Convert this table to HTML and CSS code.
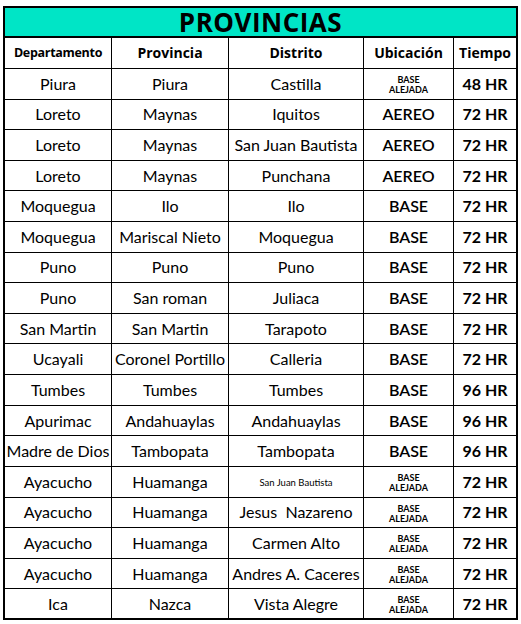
FILE: index.html
```html
<!DOCTYPE html>
<html lang="es">
<head>
<meta charset="utf-8">
<title>Provincias</title>
<link rel="stylesheet" href="styles.css">
</head>
<body>
<div class="sheet">
<div class="grid">
<div class="title">PROVINCIAS</div>
<div class="th small">Departamento</div><div class="th">Provincia</div><div class="th">Distrito</div><div class="th">Ubicación</div><div class="th">Tiempo</div>

<div class="td">Piura</div><div class="td">Piura</div><div class="td">Castilla</div><div class="td tiny"><span>BASE</span><span>ALEJADA</span></div><div class="td hr">48 HR</div>
<div class="td">Loreto</div><div class="td">Maynas</div><div class="td">Iquitos</div><div class="td b">AEREO</div><div class="td hr">72 HR</div>
<div class="td">Loreto</div><div class="td">Maynas</div><div class="td">San Juan Bautista</div><div class="td b">AEREO</div><div class="td hr">72 HR</div>
<div class="td">Loreto</div><div class="td">Maynas</div><div class="td">Punchana</div><div class="td b">AEREO</div><div class="td hr">72 HR</div>
<div class="td">Moquegua</div><div class="td">Ilo</div><div class="td">Ilo</div><div class="td b">BASE</div><div class="td hr">72 HR</div>
<div class="td">Moquegua</div><div class="td">Mariscal Nieto</div><div class="td">Moquegua</div><div class="td b">BASE</div><div class="td hr">72 HR</div>
<div class="td">Puno</div><div class="td">Puno</div><div class="td">Puno</div><div class="td b">BASE</div><div class="td hr">72 HR</div>
<div class="td">Puno</div><div class="td">San roman</div><div class="td">Juliaca</div><div class="td b">BASE</div><div class="td hr">72 HR</div>
<div class="td">San Martin</div><div class="td">San Martin</div><div class="td">Tarapoto</div><div class="td b">BASE</div><div class="td hr">72 HR</div>
<div class="td">Ucayali</div><div class="td">Coronel Portillo</div><div class="td">Calleria</div><div class="td b">BASE</div><div class="td hr">72 HR</div>
<div class="td">Tumbes</div><div class="td">Tumbes</div><div class="td">Tumbes</div><div class="td b">BASE</div><div class="td hr">96 HR</div>
<div class="td">Apurimac</div><div class="td">Andahuaylas</div><div class="td">Andahuaylas</div><div class="td b">BASE</div><div class="td hr">96 HR</div>
<div class="td">Madre de Dios</div><div class="td">Tambopata</div><div class="td">Tambopata</div><div class="td b">BASE</div><div class="td hr">96 HR</div>
<div class="td">Ayacucho</div><div class="td">Huamanga</div><div class="td mini">San Juan Bautista</div><div class="td tiny"><span>BASE</span><span>ALEJADA</span></div><div class="td hr">72 HR</div>
<div class="td">Ayacucho</div><div class="td">Huamanga</div><div class="td">Jesus&nbsp; Nazareno</div><div class="td tiny"><span>BASE</span><span>ALEJADA</span></div><div class="td hr">72 HR</div>
<div class="td">Ayacucho</div><div class="td">Huamanga</div><div class="td">Carmen Alto</div><div class="td tiny"><span>BASE</span><span>ALEJADA</span></div><div class="td hr">72 HR</div>
<div class="td">Ayacucho</div><div class="td">Huamanga</div><div class="td">Andres A. Caceres</div><div class="td tiny"><span>BASE</span><span>ALEJADA</span></div><div class="td hr">72 HR</div>
<div class="td">Ica</div><div class="td">Nazca</div><div class="td">Vista Alegre</div><div class="td tiny"><span>BASE</span><span>ALEJADA</span></div><div class="td hr">72 HR</div>
</div>
</div>
</body>
</html>
```
FILE: styles.css
```css
html, body {
  margin: 0;
  padding: 0;
  background: #ffffff;
}
.sheet {
  padding: 6px 0 0 3px;
}
.grid {
  box-sizing: border-box;
  display: grid;
  grid-template-columns: 107px 117px 135px 90px 1fr;
  grid-template-rows: 30px 31px repeat(18, 1fr);
  width: 515px;
  height: 614px;
  border-left: 2px solid #000;
  border-top: 2px solid #000;
  font-family: "Lato", "Open Sans", sans-serif;
  color: #000;
}
.title, .th, .td {
  box-sizing: border-box;
  display: flex;
  align-items: center;
  justify-content: center;
  border-right: 1px solid #000;
  border-bottom: 1px solid #000;
  white-space: nowrap;
  overflow: visible;
}
.title {
  grid-column: 1 / -1;
  background: #00e5c6;
  border-right: 2px solid #000;
  border-bottom: 2px solid #000;
  font-family: "Open Sans", "Lato", sans-serif;
  font-weight: 700;
  font-size: 26px;
  line-height: 28px;
  letter-spacing: 0.5px;
}
.th {
  font-family: "Open Sans", sans-serif;
  font-weight: 700;
  font-size: 14px;
  line-height: 16px;
}
.th.small {
  font-size: 12.5px;
  letter-spacing: -0.3px;
}
.th:nth-child(6), .td:nth-child(5n+1) {
  border-right-width: 2px;
}
.td {
  font-size: 16px;
  line-height: 18px;
}
.td:nth-last-child(-n+5) {
  border-bottom-width: 2px;
}
.td.b {
  font-weight: 600;
}
.td.hr {
  font-weight: 700;
}
.td.tiny {
  flex-direction: column;
  font-size: 9px;
  line-height: 10px;
  font-weight: 700;
  padding-top: 3px;
}
.td.mini {
  font-size: 9.5px;
  padding-top: 3px;
}
```
